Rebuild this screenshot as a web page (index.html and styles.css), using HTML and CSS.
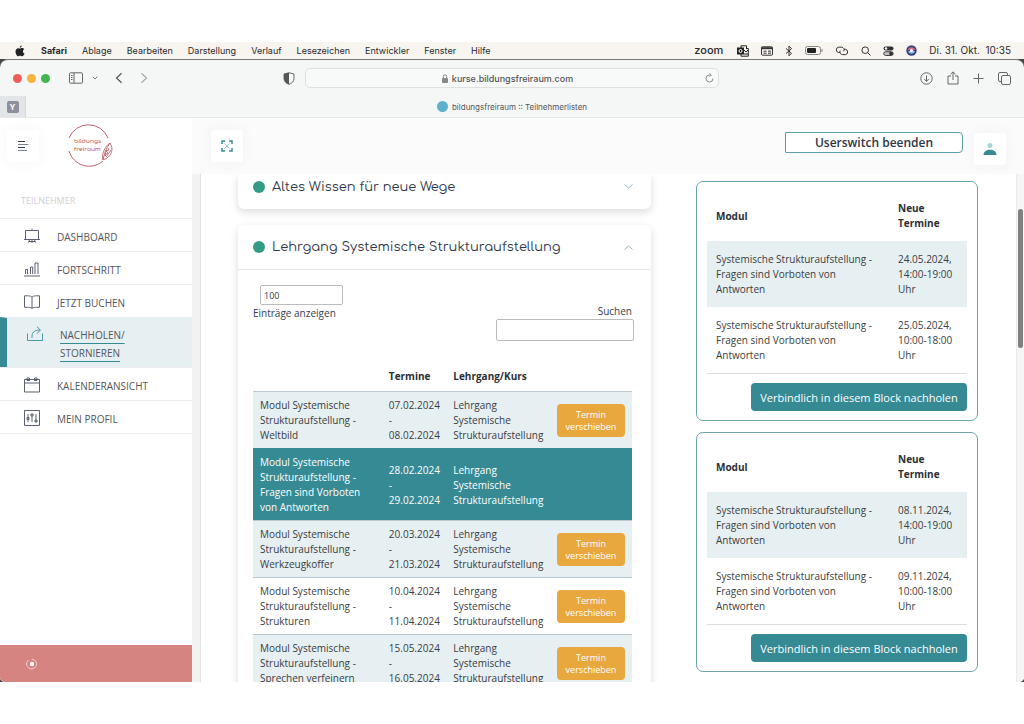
FILE: index.html
```html
<!DOCTYPE html>
<html lang="de">
<head>
<meta charset="utf-8">
<title>bildungsfreiraum :: Teilnehmerlisten</title>
<link rel="stylesheet" href="styles.css">
</head>
<body>
<div class="screen">
  <header class="menubar">
    <svg class="apple" viewBox="0 0 20 24" fill="#222"><path d="M13.500 1c.2 2-1.700 4.600-4 4.600C9.200 3.500 11.300 1.200 13.500 1zM10 7.200c1 0 2.200-1.200 4.200-1.200 1.800 0 3.400 1 4.200 2.300-3.800 2.200-3.100 7.300.7 8.800-.9 2.500-2.700 5.400-4.700 5.400-1.500 0-2-.9-4-.9s-2.600.9-4 .9C3.600 22.500 1 17.300 1 13.200 1 8.800 3.700 6.300 6.200 6.300c1.600 0 2.800.9 3.800.9z"/></svg>
    <nav class="menus"><b>Safari</b><span>Ablage</span><span>Bearbeiten</span><span>Darstellung</span><span>Verlauf</span><span>Lesezeichen</span><span>Entwickler</span><span>Fenster</span><span>Hilfe</span></nav>
    <div class="status">
      <span class="zoom">zoom</span>
      <svg width="12" height="12" viewBox="0 0 12 12" fill="none" stroke="#222"><path d="M4 3V.8h5.500V3M9 3.500h2.300v7.700H4V9"/><rect x=".5" y="3" width="6" height="6" fill="#222"/><circle cx="3.500" cy="6" r="1.500" stroke="#fff"/><path d="M7 5l2 2 2-2M7 9h4"/></svg>
      <svg width="12" height="10" viewBox="0 0 12 10" fill="none" stroke="#333"><rect x=".5" y=".8" width="11" height="8.400" rx="1"/><path d="M.5 2.200h11" stroke-width="2"/><path d="M2.500 5.200h3M7 5.200h3M2.500 7.200h3M7 7.200h3"/></svg>
      <svg width="8" height="12" viewBox="0 0 8 12" fill="none" stroke="#333"><path d="M1 3.500l5.500 4.800L4 10.800V1.200l2.500 2.500L1 8.500"/></svg>
      <svg width="18" height="9" viewBox="0 0 18 9"><rect x=".5" y=".5" width="15" height="8" rx="2" fill="none" stroke="#888"/><rect x="2" y="2" width="9" height="5" rx="1" fill="#222"/><path d="M17 3v3" stroke="#888"/></svg>
      <svg width="14" height="10" viewBox="0 0 14 10" fill="none" stroke="#333"><path d="M5 6.500H3.500a2.700 2.700 0 010-5.300h3a2.700 2.700 0 012.300 4M9 3.300h1.500a2.700 2.700 0 010 5.300h-3a2.700 2.700 0 01-2.300-4"/></svg>
      <svg width="10" height="10" viewBox="0 0 10 10" fill="none" stroke="#333"><circle cx="4.200" cy="4.200" r="3.300"/><path d="M6.700 6.700L9.500 9.500"/></svg>
      <svg width="11" height="10" viewBox="0 0 11 10"><rect x=".5" y=".5" width="10" height="4" rx="2" fill="#333"/><circle cx="3" cy="2.500" r="1.200" fill="#fff"/><rect x=".8" y="5.800" width="9.400" height="3.600" rx="1.800" fill="#ccc" stroke="#333"/><circle cx="8" cy="7.600" r="1.800" fill="#333"/></svg>
      <svg width="11" height="11" viewBox="0 0 11 11"><circle cx="5.500" cy="5.500" r="5.200" fill="#39427e"/><path d="M1.500 5C4 1 8 2 9.500 5 7 4 4 4.500 1.500 5z" fill="#e26a8b"/><path d="M2 6.500c3-2 5-1.500 7 0-2 3-5 3-7 0z" fill="#7fc4f5"/><circle cx="5.500" cy="5.500" r="1.500" fill="#fff"/></svg>
      <span class="clock">Di. 31. Okt.&nbsp; 10:35</span>
    </div>
  </header>

  <main class="browser">
    <div class="toolbar">
      <div class="tools-left">
        <i class="light red"></i><i class="light yellow"></i><i class="light green"></i>
        <svg class="side-icon" width="14" height="12" viewBox="0 0 14 12" fill="none" stroke="#666"><rect x=".5" y=".8" width="13" height="10.400" rx="1"/><path d="M5 1v10M2 3.500h1.500M2 5.500h1.500M2 7.500h1.500"/></svg>
        <svg class="drop-icon" width="6" height="4" viewBox="0 0 6 4" fill="none" stroke="#777"><path d="M.8.8L3 3 5.200.8"/></svg>
        <svg class="back-icon" width="8" height="12" viewBox="0 0 8 12" fill="none" stroke="#555" stroke-width="1.200"><path d="M6.500 1.200L1.500 6l5 4.800"/></svg>
        <svg width="8" height="12" viewBox="0 0 8 12" fill="none" stroke="#aaa" stroke-width="1.200"><path d="M1.500 1.200l5 4.800-5 4.800"/></svg>
      </div>
      <svg class="shield" width="12" height="13" viewBox="0 0 12 13"><path d="M6 .8C8 1 9.500 1.800 11 2v4.500c0 3-2.500 5-5 5.800C3.500 11.500 1 9.500 1 6.500V2C2.500 1.800 4 1 6 .8z" fill="none" stroke="#666"/><path d="M6 .8C4 1 2.500 1.800 1 2v4.500c0 3 2.500 5 5 5.800z" fill="#555"/></svg>
      <div class="address">
        <span class="url"><svg width="6" height="9" viewBox="0 0 6 9"><rect y="4" width="6" height="5" rx="1" fill="#888"/><path d="M1.300 4V2.500a1.700 1.700 0 013.400 0V4" fill="none" stroke="#888"/></svg>kurse.bildungsfreiraum.com</span>
        <svg width="9" height="10" viewBox="0 0 9 10" fill="none" stroke="#888"><path d="M8 5.500A3.500 3.500 0 114.500 2H6M4.500.3L6.300 2 4.500 3.800"/></svg>
      </div>
      <div class="tools-right">
        <svg width="13" height="13" viewBox="0 0 13 13" fill="none" stroke="#666"><circle cx="6.500" cy="6.500" r="5.700"/><path d="M6.500 3.500v5.800M4.200 7l2.300 2.300L8.800 7"/></svg>
        <svg width="12" height="14" viewBox="0 0 12 14" fill="none" stroke="#666"><path d="M4 5H1v8h10V5H8M6 9V1M3.500 3.300L6 .8l2.500 2.500"/></svg>
        <svg width="11" height="11" viewBox="0 0 11 11" fill="none" stroke="#666"><path d="M5.500.5v10M.5 5.500h10"/></svg>
        <svg width="13" height="13" viewBox="0 0 13 13" fill="none" stroke="#666"><rect x="3.500" y="3.500" width="9" height="9" rx="1.500"/><path d="M3 9.500H2A1.500 1.500 0 01.5 8V2A1.500 1.500 0 012 .5h6A1.500 1.500 0 019.500 2v1"/></svg>
      </div>
    </div>
    <div class="tabs">
      <div class="pinned"><b>Y</b></div>
      <div class="tab"><i></i>bildungsfreiraum :: Teilnehmerlisten</div>
    </div>

    <div class="app">
      <aside class="sidebar">
        <div class="brand">
          <button class="square" aria-label="Menü"><svg width="12" height="12" viewBox="0 0 12 12" stroke="#333f50" stroke-width="1.200"><path d="M1 1.500h7M1 7.500h7"/><path d="M1 4.500h10.500M1 10.500h9" stroke="#7b8391"/></svg></button>
          <svg class="logo" width="46" height="46" viewBox="0 0 46 46" fill="none" stroke="#c0616a"><path d="M2 15A21 21 0 0141 15M36 38A21 21 0 012 28"/><g stroke-width=".9"><path d="M36 37c-2-5 2-14 7-17 4 6 2 14-7 17zM43 20c-4 6-6 11-7 17M41 25l1 2-3 1 2 2-3 2 2 2M39 27l-1 6M44 27l-4 6"/></g><text x="7" y="20" class="logo-text">bildungs</text><text x="7" y="28" class="logo-text">freiraum</text></svg>
        </div>
        <h2 class="side-title">TEILNEHMER</h2>
        <nav class="side-nav">
          <a href="#"><svg width="16" height="16" viewBox="0 0 16 16"><path d="M1.500 2.500h13v9h-13zM8 2.500V.5M0 11.500h16M5.500 12l-1 2.500M8 12v3M10.500 12l1 2.500M5 13.500h6"/></svg><span>DASHBOARD</span></a>
          <a href="#"><svg width="16" height="16" viewBox="0 0 16 16"><path d="M0 15h16M1.500 13V8.500h2V13M6.500 13V6h2.200v7M11 13V2h3v11"/></svg><span>FORTSCHRITT</span></a>
          <a href="#"><svg width="16" height="16" viewBox="0 0 16 16"><path d="M8 3C6.500 1.800 5 1.800.5 1.800v11.500c4.500 0 6 0 7.500 1.200 1.500-1.200 3-1.200 7.500-1.200V1.800C11 1.800 9.500 1.800 8 3zv11.500"/></svg><span>JETZT BUCHEN</span></a>
          <a href="#" class="active"><svg width="16" height="16" viewBox="0 0 16 16"><path d="M.5 7.500v7h15v-7M5 12C4.500 7 7 4 13 4M10 .8L13.500 4 10 7.500"/></svg><span>NACHHOLEN/<br>STORNIEREN</span></a>
          <a href="#"><svg width="16" height="16" viewBox="0 0 16 16"><path d="M.5 2.500h15v12.500H.5zM.5 6h15M3 1h2.500v2.500H3zM10.500 1H13v2.500h-2.500z"/></svg><span>KALENDERANSICHT</span></a>
          <a href="#"><svg width="16" height="16" viewBox="0 0 16 16"><path d="M.5.5h15v15H.5zM4 4v8M8 4v8M12 4v8M3 7.500h2v2H3zM7 4h2v2H7zM11 10h2v2h-2z"/></svg><span>MEIN PROFIL</span></a>
        </nav>
        <div class="side-foot"><svg width="12" height="12" viewBox="0 0 12 12"><path d="M2.500 2A5 5 0 106 1" fill="none" stroke="#f2c9c9"/><circle cx="6" cy="6" r="2.200" fill="#fff"/></svg></div>
      </aside>

      <section class="page">
        <div class="page-head">
          <button class="square" aria-label="Vollbild"><svg width="12" height="12" viewBox="0 0 12 12" fill="none" stroke="#3a8a94" stroke-width="1.500"><path d="M1 4V1h3M8 1h3v3M11 8v3H8M4 11H1V8"/><path d="M3.500 3.500l5 5M8.500 3.500l-5 5" stroke="#a9cfd2" stroke-width="1"/></svg></button>
          <button class="switch">Userswitch beenden</button>
          <button class="square user" aria-label="Profil"><svg width="14" height="14" viewBox="0 0 14 14"><circle cx="7" cy="3.500" r="2.500" fill="#a9d3d0"/><path d="M.5 13c0-7 13-7 13 0z" fill="#368a94"/></svg></button>
        </div>
        <div class="scroll">
          <div class="content">
            <div class="courses">
              <article class="card clipped">
                <h3 class="card-head"><i></i>Altes Wissen für neue Wege<svg width="9" height="5" viewBox="0 0 9 5"><path d="M.5.5l4 3.500 4-3.500"/></svg></h3>
              </article>
              <article class="card">
                <h3 class="card-head"><i></i>Lehrgang Systemische Strukturaufstellung<svg width="9" height="5" viewBox="0 0 9 5"><path d="M.5 4.500l4-3.500 4 3.500"/></svg></h3>
                <div class="card-body">
                  <div class="length"><select id="len"><option>100</option></select><label for="len">Einträge anzeigen</label></div>
                  <div class="search"><label for="q">Suchen</label><input id="q" type="text"></div>
                  <div class="table-wrap">
                  <table class="dates">
                    <thead><tr><th class="c1"></th><th class="c2">Termine</th><th class="c3">Lehrgang/Kurs</th><th class="c4"></th></tr></thead>
                    <tbody>
                      <tr class="tint"><td>Modul Systemische Strukturaufstellung - Weltbild</td><td>07.02.2024<br>-<br>08.02.2024</td><td>Lehrgang Systemische Strukturaufstellung</td><td><button class="move">Termin verschieben</button></td></tr>
                      <tr class="picked"><td>Modul Systemische Strukturaufstellung - Fragen sind Vorboten von Antworten</td><td>28.02.2024<br>-<br>29.02.2024</td><td>Lehrgang Systemische Strukturaufstellung</td><td></td></tr>
                      <tr class="tint"><td>Modul Systemische Strukturaufstellung - Werkzeugkoffer</td><td>20.03.2024<br>-<br>21.03.2024</td><td>Lehrgang Systemische Strukturaufstellung</td><td><button class="move">Termin verschieben</button></td></tr>
                      <tr><td>Modul Systemische Strukturaufstellung - Strukturen</td><td>10.04.2024<br>-<br>11.04.2024</td><td>Lehrgang Systemische Strukturaufstellung</td><td><button class="move">Termin verschieben</button></td></tr>
                      <tr class="tint"><td>Modul Systemische Strukturaufstellung - Sprechen verfeinern</td><td>15.05.2024<br>-<br>16.05.2024</td><td>Lehrgang Systemische Strukturaufstellung</td><td><button class="move">Termin verschieben</button></td></tr>
                    </tbody>
                  </table>
                  </div>
                </div>
              </article>
            </div>
            <div class="blocks">
              <article class="block">
                <table>
                  <thead><tr><th>Modul</th><th class="when">Neue Termine</th></tr></thead>
                  <tbody>
                    <tr class="tint"><td>Systemische Strukturaufstellung - Fragen sind Vorboten von Antworten</td><td>24.05.2024, 14:00-19:00 Uhr</td></tr>
                    <tr><td>Systemische Strukturaufstellung - Fragen sind Vorboten von Antworten</td><td>25.05.2024, 10:00-18:00 Uhr</td></tr>
                  </tbody>
                </table>
                <button class="book">Verbindlich in diesem Block nachholen</button>
              </article>
              <article class="block">
                <table>
                  <thead><tr><th>Modul</th><th class="when">Neue Termine</th></tr></thead>
                  <tbody>
                    <tr class="tint"><td>Systemische Strukturaufstellung - Fragen sind Vorboten von Antworten</td><td>08.11.2024, 14:00-19:00 Uhr</td></tr>
                    <tr><td>Systemische Strukturaufstellung - Fragen sind Vorboten von Antworten</td><td>09.11.2024, 10:00-18:00 Uhr</td></tr>
                  </tbody>
                </table>
                <button class="book">Verbindlich in diesem Block nachholen</button>
              </article>
            </div>
          </div>
          <div class="scrollbar"><i></i></div>
        </div>
      </section>
    </div>
  </main>
</div>
</body>
</html>
```

FILE: styles.css
```css
* { box-sizing: border-box; }
body { margin: 0; background: #fff; font-family: "Open Sans", sans-serif; font-size: 10px; line-height: 15px; color: #3c3f44; }
button, input, select { font: inherit; color: inherit; margin: 0; }
button { cursor: pointer; }
svg { flex: none; }
i { display: block; flex: none; }

.screen { height: 100vh; padding: 42px 0; display: flex; flex-direction: column; background: linear-gradient(#fff, #fff) top / 100% 42px no-repeat, linear-gradient(#fff, #fff) bottom / 100% 42px no-repeat, #44444a; }

/* system menu bar */
.menubar { flex: none; height: 17px; padding: 0 13px 0 15px; display: flex; align-items: center; background: #f8f4f0; font-family: Inter, sans-serif; font-size: 9px; color: #2b2b2b; white-space: nowrap; }
.apple { width: 10px; height: 12px; }
.menus { display: flex; gap: 15px; margin-left: 16px; }
.status { display: flex; align-items: center; gap: 12px; margin-left: auto; }
.zoom { font-size: 11px; font-weight: 500; padding-right: 2px; }
.clock { font-size: 10px; }

/* browser chrome */
.browser { flex: 1; min-height: 0; display: flex; flex-direction: column; overflow: hidden; border-top: 1px solid #777; border-radius: 8px 8px 5px 5px; background: #f5f7f7; }
.toolbar { flex: none; height: 36px; padding: 0 13px; display: grid; grid-template-columns: 270px 22px 1fr 208px 84px; align-items: center; }
.tools-left, .tools-right { display: flex; align-items: center; }
.light { width: 9px; height: 9px; margin-right: 5px; border-radius: 50%; }
.red { background: #ee5f59; }
.yellow { background: #f5b43d; }
.green { background: #42b64c; }
.side-icon { margin-left: 14px; }
.drop-icon { margin: 0 17px 0 9px; }
.back-icon { margin-right: 17px; }
.address { height: 20px; display: flex; align-items: center; padding: 0 4px; border: 1px solid #dde1e1; border-radius: 5px; background: #f7faf9; font-family: Inter, sans-serif; font-size: 9px; font-weight: 500; color: #555; }
.url { flex: 1; display: flex; align-items: center; justify-content: center; gap: 4px; }
.tools-right { grid-column: 5; justify-content: flex-end; gap: 14px; }
.tabs { flex: none; height: 22px; display: flex; border-bottom: 1px solid #e6e9e9; font-family: Inter, sans-serif; font-size: 8px; line-height: 12px; color: #555; }
.pinned { width: 26px; display: flex; align-items: center; justify-content: center; background: #e3e6e8; border-right: 1px solid #d6dadb; }
.pinned b { width: 12px; text-align: center; border-radius: 2px; background: #8e8f9c; color: #fff; }
.tab { flex: 1; display: flex; align-items: center; justify-content: center; gap: 4px; padding-right: 26px; }
.tab i { width: 11px; height: 11px; border-radius: 50%; background: #5fb0cb; }

/* sidebar */
.app { flex: 1; min-height: 0; display: flex; background: #fff; }
.sidebar { flex: none; width: 192px; display: flex; flex-direction: column; }
.brand { height: 56px; padding-left: 7px; display: flex; align-items: center; }
.square { width: 32px; height: 32px; flex: none; padding: 0; display: flex; align-items: center; justify-content: center; border: 0; border-radius: 3px; background: #fff; box-shadow: 0 0 14px rgba(70, 70, 120, .05); }
.logo { margin-left: 28px; }
.logo-text { font-family: Comfortaa, Lato, sans-serif; font-size: 6px; font-weight: 600; fill: #b9505a; stroke: none; }
.side-title { margin: 19px 0 9px 21px; font-size: 9px; line-height: 16px; font-weight: 400; color: #d0d0d4; }
.side-nav a { display: flex; align-items: center; gap: 17px; min-height: 33px; padding: 4px 0 0 24px; border-top: 1px solid #ebebed; color: #54565a; line-height: 18px; text-decoration: none; }
.side-nav a:last-child { border-bottom: 1px solid #ebebed; min-height: 34px; }
.side-nav svg { fill: none; stroke: #5b6173; margin-top: -2px; }
.side-nav .active { min-height: 50px; align-items: flex-start; padding: 8px 0 5px 20px; border-left: 7px solid #368a94; border-top-color: #e6eff2; background: #e6eff2; text-decoration: underline; text-decoration-color: #368a94; text-decoration-thickness: 1px; text-underline-offset: 4px; }
.side-nav .active svg { stroke: #4a9aa2; margin-top: 0; }
.side-foot { margin-top: auto; height: 37px; padding-left: 26px; display: flex; align-items: center; background: #d68481; }

/* page */
.page { flex: 1; min-width: 0; display: flex; flex-direction: column; }
.page-head { flex: none; height: 56px; padding: 0 18px 0 19px; display: flex; align-items: center; background: #fbfbfc; }
.switch { width: 178px; height: 21px; margin: 0 11px 8px auto; padding: 0; border: 1px solid #5c9ea4; border-radius: 1px 4px 4px 1px; background: #fff; color: #2e3648; font-size: 12px; font-weight: 600; line-height: 15px; }
.user { align-self: flex-end; margin-bottom: 9px; }
.scroll { flex: 1; min-height: 0; display: flex; border-left: 8px solid #f2f2f2; overflow: hidden; }
.content { flex: 1; min-width: 0; display: grid; grid-template-columns: 413fr 282fr; gap: 45px; padding: 0 38px 0 37px; border-left: 1px solid #e4e4e4; align-items: start; }
.scrollbar { flex: none; width: 8px; padding: 35px 1px 0; background: #f5f5f5; border-left: 1px solid #eaeaea; }
.scrollbar i { width: 5px; height: 139px; border-radius: 3px; background: #808080; }
.courses { display: grid; gap: 16px; }
.card { border-radius: 6px; background: #fff; box-shadow: 0 3px 9px rgba(0, 0, 0, .14); }
.clipped { padding-bottom: 10px; border-radius: 0 0 6px 6px; }
.card-head { height: 44px; margin: 0; padding: 0 18px 0 15px; display: flex; align-items: center; gap: 7px; font-family: Comfortaa, Quicksand, Lato, sans-serif; font-size: 13px; line-height: 18px; font-weight: 400; color: #2f384b; }
.clipped .card-head { height: 25px; }
.card-head i { width: 12px; height: 12px; border-radius: 50%; background: #349c86; }
.card-head svg { margin-left: auto; fill: none; stroke: #9ab2cc; }
.card-body { border-top: 1px solid #e4e7ea; padding: 15px 17px 20px 15px; color: #343d50; }
.length { display: flex; flex-direction: column; align-items: flex-start; }
.length select { width: 83px; height: 20px; margin-left: 7px; padding: 0 3px; appearance: none; border: 1px solid #bbb; border-radius: 2px; background: #fff; font-size: 9px; }
.search { margin-top: -18px; display: flex; flex-direction: column; align-items: flex-end; }
.length label, .search label { line-height: 16px; }
.search label { padding-right: 2px; }
.search input { width: 138px; height: 22px; border: 1px solid #bbb; border-radius: 2px; background: #fff; }
.table-wrap { padding: 21px 2px 0 0; }

table { width: 100%; border-collapse: collapse; color: #3a3d42; }
th { text-align: left; font-weight: 700; color: #2c2f34; }
.tint { background: #e6eff2; }
.dates { table-layout: fixed; }
.dates th { padding: 7px; height: 29px; }
.dates td { padding: 6px 7px 5px; border-top: 1px solid #b9c9cf; }
.c1 { width: 34%; }
.c2 { width: 17%; }
.c3 { width: 27%; }
.c4 { width: 22%; }
.dates .picked { background: #368a94; color: #fff; }
.dates .picked td { border-color: #368a94; }
.move { display: block; width: 68px; height: 33px; margin-left: auto; padding: 0; border: 0; border-radius: 4px; background: #e8a83e; color: #fff; line-height: 12px; font-size: 9px; }

.blocks { display: grid; gap: 11px; padding-top: 7px; }
.block { padding: 9px 10px; border: 1px solid #6ba5a9; border-radius: 7px; background: #fff; }
.block table { table-layout: fixed; border-bottom: 1px solid #dedee2; }
.block th, .block td { padding: 10px 9px; }
.block tbody td { padding-top: 11px; }
.block .when { width: 30%; }
.book { display: block; width: 216px; height: 28px; margin: 9px 0 0 auto; padding: 0; border: 0; border-radius: 4px; background: #368a94; color: #fff; font-size: 11px; }
```
